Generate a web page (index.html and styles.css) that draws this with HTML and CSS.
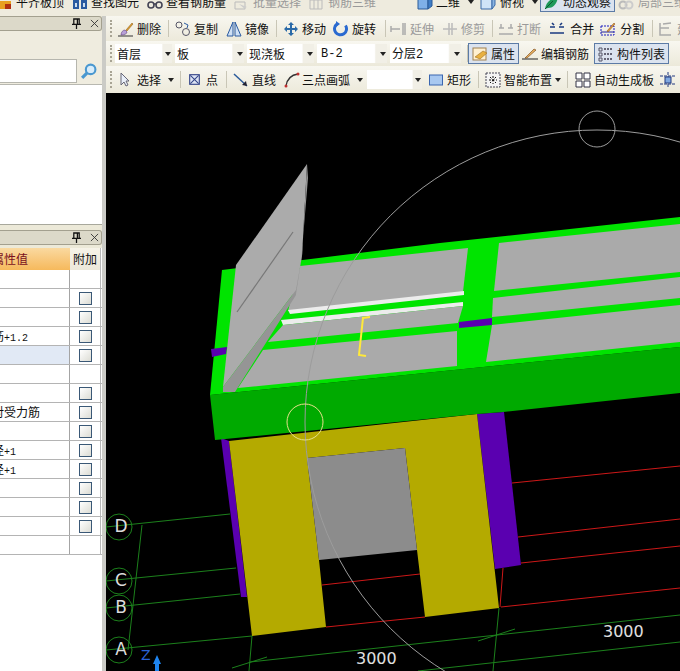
FILE: index.html
```html
<!DOCTYPE html>
<html lang="zh">
<head>
<meta charset="utf-8">
<title>板 三维</title>
<link rel="stylesheet" href="styles.css">
</head>
<body>
<div class="app">
  <div class="bar top">
    <span class="tool w-top1"><svg class="ic ic-s" viewBox="0 0 13 16"><rect x="0" y="7" width="11" height="8" fill="#e8a020"/><rect x="5" y="10" width="6" height="5" fill="#b03010"/></svg><span class="t">平齐板顶</span></span>
    <span class="tool w-top2"><svg class="ic" viewBox="0 0 16 16"><rect x="1" y="5" width="6" height="10" fill="#2a5aa0"/><rect x="9" y="5" width="6" height="10" fill="#2a5aa0"/><rect x="3" y="9" width="2" height="4" fill="#cde"/><rect x="11" y="9" width="2" height="4" fill="#cde"/></svg><span class="t">查找图元</span></span>
    <span class="tool w-top3"><svg class="ic" viewBox="0 0 16 16"><circle cx="4" cy="11" r="3" fill="none" stroke="#445" stroke-width="1.6"/><circle cx="12" cy="11" r="3" fill="none" stroke="#445" stroke-width="1.6"/><path d="M7 10h2" stroke="#445" stroke-width="1.6"/></svg><span class="t">查看钢筋量</span></span>
    <span class="tool off w-top4"><svg class="ic" viewBox="0 0 16 16"><path d="M1 8h10v7H1z" fill="none" stroke="#bbb"/><path d="M5 10l8 3-3 1 2 2" fill="#ccc"/></svg><span class="t">批量选择</span></span>
    <span class="tool off w-top5"><svg class="ic" viewBox="0 0 16 16"><path d="M2 6h12v9H2zM6 6v9M10 6v9" fill="none" stroke="#bbb"/></svg><span class="t">钢筋三维</span></span>
    <span class="tool w-top6"><svg class="ic" viewBox="0 0 16 16"><path d="M1 3h10v12H1z" fill="#7fb0e8" stroke="#2a5a98"/><path d="M11 3l4-2v11l-4 3z" fill="#3f7cc4" stroke="#2a5a98"/></svg><span class="t">二维</span><i class="arrow a5"></i></span>
    <span class="tool w-top7"><svg class="ic" viewBox="0 0 16 16"><path d="M1 4h11v11H1z" fill="#d0e4f8" stroke="#3a6aa8"/><path d="M12 4l3-3v10l-3 4z" fill="#8ab4e0" stroke="#3a6aa8"/></svg><span class="t">俯视</span><i class="arrow a4"></i></span>
    <span class="tool on w-top8"><svg class="ic" viewBox="0 0 16 16"><path d="M2 15C3 8 8 4 15 3c-1 6-4 11-10 11z" fill="#1f9a5a"/><path d="M2 15l8-8" stroke="#0c5a30"/></svg><span class="t">动态观察</span></span>
    <span class="tool off w-top9"><svg class="ic" viewBox="0 0 16 16"><circle cx="5" cy="11" r="3.500" fill="none" stroke="#bbb" stroke-width="2"/><circle cx="11" cy="11" r="3.500" fill="none" stroke="#ccc" stroke-width="2"/></svg><span class="t">局部三维</span></span>
  </div>

  <div class="main">
    <aside class="left">
      <div class="phead"><svg class="pin" viewBox="0 0 10 12"><path d="M2 1h6v6H2zM0 7h10M5 7v5M6 1v6" fill="none" stroke="#111" stroke-width="1.4"/></svg><svg class="close" viewBox="0 0 10 10"><path d="M1 1l8 8M9 1l-8 8" stroke="#333"/></svg></div>
      <div class="search">
        <div class="input"></div>
        <svg class="mag" viewBox="0 0 16 16"><circle cx="10" cy="6" r="4.500" fill="#d8ecfa" stroke="#4a98d0" stroke-width="2"/><path d="M6.500 9.500L2 14" stroke="#4a98d0" stroke-width="3"/></svg>
      </div>
      <div class="tree"></div>

      <div class="phead second"><svg class="pin" viewBox="0 0 10 12"><path d="M2 1h6v6H2zM0 7h10M5 7v5M6 1v6" fill="none" stroke="#111" stroke-width="1.4"/></svg><svg class="close" viewBox="0 0 10 10"><path d="M1 1l8 8M9 1l-8 8" stroke="#333"/></svg></div>
      <div class="table">
        <div class="row head"><div class="val"><span class="cut">属性值</span></div><div class="add">附加</div></div>
        <div class="row"><div class="val"></div><div class="add"></div></div>
        <div class="row"><div class="val"></div><div class="add"><i class="cb"></i></div></div>
        <div class="row"><div class="val"></div><div class="add"><i class="cb"></i></div></div>
        <div class="row"><div class="val"><span class="cut">筋<span class="lat">+1.2</span></span></div><div class="add"><i class="cb"></i></div></div>
        <div class="row sel-row"><div class="val"></div><div class="add"><i class="cb"></i></div></div>
        <div class="row"><div class="val"></div><div class="add"></div></div>
        <div class="row"><div class="val"></div><div class="add"><i class="cb"></i></div></div>
        <div class="row"><div class="val"><span class="cut">对受力筋</span></div><div class="add"><i class="cb"></i></div></div>
        <div class="row"><div class="val"></div><div class="add"><i class="cb"></i></div></div>
        <div class="row"><div class="val"><span class="cut">径<span class="lat">+1</span></span></div><div class="add"><i class="cb"></i></div></div>
        <div class="row"><div class="val"><span class="cut">径<span class="lat">+1</span></span></div><div class="add"><i class="cb"></i></div></div>
        <div class="row"><div class="val"></div><div class="add"><i class="cb"></i></div></div>
        <div class="row"><div class="val"></div><div class="add"><i class="cb"></i></div></div>
        <div class="row"><div class="val"></div><div class="add"><i class="cb"></i></div></div>
        <div class="row"><div class="val"></div><div class="add"></div></div>
      </div>
      <div class="fill"></div>
    </aside>

    <section class="right">
      <div class="bar tb">
        <i class="grip"></i>
        <span class="tool"><svg class="ic" viewBox="0 0 16 16"><path d="M0 15h15" stroke="#333"/><path d="M3 14c0-3 2-5 4-5l2 2c0 2-3 3-6 3z" fill="#b8a0d8" stroke="#604080" stroke-width=".6"/><path d="M8 9l6-7 1 1-6 7z" fill="#e0a030" stroke="#805010" stroke-width=".5"/></svg><span class="t">删除</span></span>
        <i class="sep ml1"></i>
        <span class="tool"><svg class="ic" viewBox="0 0 16 16"><circle cx="4" cy="4" r="3" fill="none" stroke="#556"/><circle cx="11" cy="11" r="3.500" fill="none" stroke="#556"/><path d="M9 2l4 2-1 3" fill="none" stroke="#2a5aa0"/></svg><span class="t">复制</span></span>
        <span class="tool ml2"><svg class="ic" viewBox="0 0 16 16"><path d="M7 1L1 15h6zM9 1l6 14H9z" fill="#cfe0f4" stroke="#2a5aa0"/></svg><span class="t">镜像</span></span>
        <i class="sep ml1"></i>
        <span class="tool"><svg class="ic" viewBox="0 0 16 16"><path d="M8 1l3 3H9v3h3V5l3 3-3 3V9H9v3h2l-3 3-3-3h2V9H4v2L1 8l3-3v2h3V4H5z" fill="#2a6aa8"/></svg><span class="t">移动</span></span>
        <span class="tool ml1"><svg class="ic" viewBox="0 0 16 16"><path d="M12.500 4.500A6 6 0 1 1 4 3" fill="none" stroke="#2a6ad0" stroke-width="3"/><path d="M3 0l4 3-4 3z" fill="#2a6ad0"/></svg><span class="t">旋转</span></span>
        <i class="sep ml3"></i>
        <span class="tool off mln2 g4"><svg class="ic" viewBox="0 0 16 16"><path d="M1 5v6M1 8h9M13 2v12M15 2v12" fill="none" stroke="#aaa" stroke-width="1.500"/></svg><span class="t">延伸</span></span>
        <span class="tool off ml2"><svg class="ic" viewBox="0 0 16 16"><path d="M1 8h14M7 2v12M10 2v12" fill="none" stroke="#bbb" stroke-width="1.500"/></svg><span class="t">修剪</span></span>
        <i class="sep ml1"></i>
        <span class="tool off mln1"><svg class="ic" viewBox="0 0 16 16"><path d="M1 7h5M10 7h5M1 13h14M3 3v4M13 3v4" fill="none" stroke="#aaa" stroke-width="1.500"/></svg><span class="t">打断</span></span>
        <span class="tool ml2 g5"><svg class="ic" viewBox="0 0 16 16"><path d="M1 6h5M10 6h5M1 12h14M3 2l2 2M13 2l-2 2" fill="none" stroke="#1a3a80" stroke-width="1.600"/></svg><span class="t">合并</span></span>
        <span class="tool g4"><svg class="ic" viewBox="0 0 16 16"><rect x="1" y="5" width="13" height="9" fill="none" stroke="#1a1ac0" stroke-dasharray="2 1"/><path d="M1 11h13" stroke="#2020a0"/><path d="M7 10l7-8 1 1-7 8z" fill="#e0a040" stroke="#804010" stroke-width=".5"/></svg><span class="t">分割</span></span>
        <i class="sep ml2"></i>
        <span class="tool off mln1"><svg class="ic" viewBox="0 0 16 16"><path d="M2 2v12h11M2 7h9M5 3l8-1" fill="none" stroke="#aaa" stroke-width="1.500"/></svg><span class="t">延</span></span>
      </div>

      <div class="bar tb">
        <i class="grip"></i>
        <span class="sel sw1 mln3"><span class="t">首层</span><i class="arrow"></i></span>
        <span class="sel sw2"><span class="t">板</span><i class="arrow"></i></span>
        <span class="sel sw3"><span class="t">现浇板</span><i class="arrow"></i></span>
        <span class="sel sw4"><span class="lat big">B-2</span><i class="arrow"></i></span>
        <span class="sel sw5"><span class="t">分层<span class="lat big">2</span></span><i class="arrow"></i></span>
        <i class="sep"></i>
        <span class="tool on w-attr mln6"><svg class="ic" viewBox="0 0 16 16"><rect x="1" y="2" width="13" height="12" fill="#fff0d0" stroke="#a08050"/><path d="M3 11l8-6 4 2-7 6z" fill="#e8b040" stroke="#906010" stroke-width=".5"/></svg><span class="t">属性</span></span>
        <span class="tool mln3"><svg class="ic" viewBox="0 0 16 16"><path d="M0 13h16" stroke="#222"/><path d="M3 12l9-9 2 1-9 8z" fill="#e8b060" stroke="#704010" stroke-width=".6"/></svg><span class="t">编辑钢筋</span></span>
        <span class="tool on w-list mln1"><svg class="ic" viewBox="0 0 16 16"><path d="M1 2h3v3H1zM1 7h3v3H1zM1 12h3v3H1z" fill="none" stroke="#556"/><path d="M6 3h8M6 8h8M6 13h8" stroke="#667" stroke-width="2" stroke-dasharray="2 1"/></svg><span class="t">构件列表</span></span>
      </div>

      <div class="bar tb last">
        <i class="grip"></i>
        <span class="tool ml2 g7"><svg class="ic ic-n" viewBox="0 0 10 16"><path d="M1 1v12l3-3 2 4 2-1-2-4h3z" fill="#e8eef8" stroke="#667"/></svg><span class="t">选择</span><i class="arrow"></i></span>
        <i class="sep"></i>
        <span class="tool ml2 g6"><svg class="ic ic-p" viewBox="0 0 16 16"><rect x="1" y="1" width="14" height="14" fill="#dde4f4" stroke="#334488" stroke-width="1.600"/><path d="M2 2l12 12M14 2L2 14" stroke="#334488" stroke-width="1.500"/></svg><span class="t">点</span></span>
        <i class="sep ml2"></i>
        <span class="tool"><svg class="ic" viewBox="0 0 16 16"><path d="M1 2l13 12" stroke="#2a5a9a" stroke-width="1.500"/><path d="M14 14l-1-5-4 4z" fill="#223"/></svg><span class="t">直线</span></span>
        <span class="tool ml2 g2"><svg class="ic" viewBox="0 0 16 16"><path d="M2 14C3 7 7 3 14 2" fill="none" stroke="#333" stroke-width="1.300"/><circle cx="2" cy="14" r="1.500" fill="#c03030"/><circle cx="14" cy="2" r="1.500" fill="#c03030"/></svg><span class="t">三点画弧</span><i class="arrow a5"></i></span>
        <span class="sel sw6 mln2"><i class="arrow"></i></span>
        <span class="tool"><svg class="ic" viewBox="0 0 16 16"><rect x="1.500" y="3" width="13" height="10" fill="#a8c8f0" stroke="#3a66b0"/></svg><span class="t">矩形</span></span>
        <i class="sep ml1"></i>
        <span class="tool"><svg class="ic" viewBox="0 0 16 16"><rect x="1" y="1" width="14" height="14" fill="#f4f4f4" stroke="#445" stroke-dasharray="2 1"/><path d="M8 4v8M4 8h8M5 5l6 6M11 5l-6 6" stroke="#111" stroke-dasharray="2 1.500"/></svg><span class="t">智能布置</span><i class="arrow"></i></span>
        <i class="sep"></i>
        <span class="tool ml1"><svg class="ic" viewBox="0 0 16 16"><path d="M1 1h6v6H1zM9 1h6v6H9zM1 9h6v6H1zM9 9h6v6H9z" fill="#fff" stroke="#334"/></svg><span class="t">自动生成板</span></span>
        <span class="tool"><svg class="ic" viewBox="0 0 16 16"><path d="M0 4h16M0 12h16M8 0v16" stroke="#223a80" stroke-dasharray="3 1"/><rect x="5" y="5" width="6" height="6" fill="#80a8e0" stroke="#223a80"/></svg></span>
      </div>

      <svg class="view" viewBox="106 93 574 578" xmlns="http://www.w3.org/2000/svg">
        <rect x="106" y="93" width="574" height="578" fill="#000"/>

        <g class="grid-g">
          <path d="M106 527L230 514M106 581L236 568M106 608L240 594M106 650L252 636"/>
          <path d="M142 525L128 650M252 636L249 671M499 608L493 671"/>
          <path d="M250 662L680 615M418 671L680 642M232 668L267 657M478 641L515 629"/>
          <circle cx="119" cy="527" r="13"/><circle cx="119" cy="581" r="13"/><circle cx="119" cy="608" r="13"/><circle cx="119" cy="650" r="13"/>
        </g>
        <g class="grid-r">
          <path d="M322 585L420 574M326 627L425 617M512 483L680 466M518 537L680 519M521 563L680 546M501 607L680 588M503 568L500 607"/>
        </g>

        <polygon class="purple" points="221,438 229,441 247,597 241,597"/>
        <polygon class="purple" points="477,414 504,412 521,565 495,569"/>
        <polygon class="olive" points="229,441 477,414 499,608 425,617 417,550 405,448 307,458 319,560 326,627 252,636"/>
        <polygon class="back" points="307,458 405,448 417,550 319,560"/>

        <polygon class="green-d" points="210,395 680,347 680,393 503,412 477,414 215,440"/>
        <polygon class="green-l" points="210,395 222,270 440,243 680,217 680,347"/>

        <polygon class="slab" points="300,266 468,248 463,292 288,311"/>
        <polygon class="white" points="288,310 464,291 464,295 290,314"/>
        <polygon class="white" points="281,320 463,302 463,306 283,325"/>
        <polygon class="slab" points="283,325 463,306 458,323 268,342"/>
        <polygon class="slab" points="263,350 457,331 457,366 238,388"/>
        <polygon class="slab" points="499,243 680,224 680,272 494,291"/>
        <polygon class="slab" points="493,298 680,277 680,298 492,317"/>
        <polygon class="slab" points="492,325 680,305 680,342 486,362"/>
        <polygon class="purple" points="459,322 492,318 492,325 459,328"/>
        <polygon class="purple" points="211,349 227,347 226,354 212,357"/>

        <polygon class="wall" points="236,265 307,164 302,256 296,290 223,387"/>
        <polygon class="wall-d" points="307,164 308,178 301,262 296,294 296,290 302,256"/>
        <polygon class="wall-d" points="296,290 296,295 235,392 223,392 223,387"/>
        <path class="wall-line" d="M293 232L237 312"/>

        <path class="bracket" d="M370 317L363 318L359 355L366 356"/>

        <g class="orbit">
          <circle cx="597" cy="422" r="292"/>
          <circle cx="597" cy="129" r="18"/>
        </g>
        <circle class="orbit-y" cx="305" cy="422" r="18"/>

        <g class="labels">
          <text x="121" y="532">D</text>
          <text x="121" y="586">C</text>
          <text x="121" y="613">B</text>
          <text x="121" y="655">A</text>
        </g>
        <text class="dim" x="356" y="664">3000</text>
        <text class="dim" x="603" y="637">3000</text>
        <text class="axis" x="141" y="660">Z</text>
        <path class="axis-a" d="M157 655L161 664H159V671H155V664H153Z"/>
      </svg>
    </section>
  </div>
</div>
</body>
</html>
```

FILE: styles.css
```css
* { box-sizing: border-box; }
html, body { margin: 0; height: 100%; overflow: hidden; background: #ece9d8; }
body { font: 12px/16px "Noto Sans CJK SC", "Liberation Sans", sans-serif; color: #111; }

.app { width: 680px; height: 671px; display: flex; flex-direction: column; overflow: hidden; }

/* toolbars */
.bar { display: flex; align-items: center; flex: none; white-space: nowrap; overflow: hidden; }
.top { height: 28px; margin-top: -12px; padding-bottom: 1px; background: #eeebde; }
.tb { height: 25px; padding-left: 4px; gap: 6px; background: linear-gradient(#f8f7f0, #ece9da); }
.tb.last { height: 27px; }

.tool { display: inline-flex; align-items: center; gap: 3px; height: 21px; flex: none; }
.tool.off { color: #9a9a9a; }
.tool.on { background: #dbe3ef; border: 1px solid #5c7ba6; padding: 0 3px; }
.t { display: inline-block; }
.ic { width: 16px; height: 16px; flex: none; }
.ic-s { width: 13px; }
.ic-n { width: 10px; }
.ic-p { width: 11px; height: 11px; }

.grip { width: 2px; height: 17px; border-left: 2px dotted #a8a494; flex: none; }
.sep { width: 1px; height: 17px; background: #c9c6b6; flex: none; }
.arrow { width: 0; height: 0; border: 3px solid transparent; border-top: 4px solid #222; border-bottom: 0; flex: none; }
.a4 { margin-left: 4px; }
.a5 { margin-left: 5px; }
.lat { font-family: "Liberation Mono", monospace; font-size: 10px; }
.big { font-size: 12px; }

/* fine spacing inside the toolbars */
.ml1 { margin-left: 1px; }
.ml2 { margin-left: 2px; }
.ml3 { margin-left: 3px; }
.mln1 { margin-left: -1px; }
.mln2 { margin-left: -2px; }
.mln3 { margin-left: -3px; }
.mln6 { margin-left: -6px; }
.g2 { gap: 2px; }
.g4 { gap: 4px; }
.g5 { gap: 5px; }
.g6 { gap: 6px; }
.g7 { gap: 7px; }

/* top strip */
.w-top1 { width: 72px; }
.w-top2 { width: 75px; }
.w-top3 { width: 87px; }
.w-top4 { width: 74px; }
.w-top5 { width: 109px; gap: 4px; }
.w-top6 { width: 63px; }
.w-top7 { width: 60px; gap: 4px; }
.w-top8.on { width: 75px; padding: 0 2px; gap: 4px; }
.w-top9 { margin-left: 3px; gap: 4px; }

/* dropdowns */
.sel { display: inline-flex; align-items: center; justify-content: space-between; height: 19px; padding: 0 1px 0 2px; background: linear-gradient(90deg, #fff 82%, #f1efe6 84%); flex: none; }
.sel + .sel { margin-left: -3px; }
.sw1 { width: 57px; }
.sw2 { width: 69px; }
.sw3 { width: 67px; }
.sw4 { width: 70px; padding-left: 4px; }
.sw5 { width: 71px; }
.sw6 { width: 55px; justify-content: flex-end; }
.w-attr { width: 51px; }
.w-list { width: 75px; }

/* layout */
.main { flex: 1; display: flex; min-height: 0; }
.left { width: 106px; flex: none; display: flex; flex-direction: column; background: #ece9d8; border-right: 4px solid #cbcbc6; overflow: hidden; }
.right { flex: 1; display: flex; flex-direction: column; min-width: 0; }
.view { display: block; width: 574px; height: 578px; flex: none; }

/* panels */
.phead { height: 15px; flex: none; display: flex; align-items: center; justify-content: flex-end; gap: 7px; padding-right: 2px; background: #dcd9c9; border: 1px solid #a3a08f; border-left: 0; border-radius: 0 3px 3px 0; }
.second { margin-top: 5px; }
.pin { width: 9px; height: 11px; }
.close { width: 9px; height: 9px; margin-left: 2px; }
.search { height: 53px; flex: none; background: #efecdf; display: flex; align-items: flex-end; gap: 3px; padding-bottom: 1px; }
.input { width: 77px; height: 24px; background: #fff; border: 1px solid #b6b6ae; border-left: 0; }
.mag { width: 17px; height: 17px; margin-bottom: 3px; }
.tree { height: 141px; flex: none; background: #fff; border-top: 1px solid #b8b8b0; border-bottom: 1px solid #a8a89c; }
.fill { flex: 1; background: #fff; }

/* attribute table */
.table { flex: none; background: #fff; margin-top: 3px; }
.row { display: grid; grid-template-columns: 70px 31px 1px; height: 19px; border-bottom: 1px solid #b4b4b4; }
.row.head { height: 22px; border: 0; }
.val { overflow: hidden; line-height: 18px; white-space: nowrap; border-right: 1px solid #a4a4a4; }
.add { display: flex; align-items: center; justify-content: center; border-right: 1px solid #b9b9b9; }
.cut { display: block; margin-left: -8px; }
.head .val { background: linear-gradient(#fad9a0, #f6b95c); color: #7a1020; line-height: 22px; border-right: 0; }
.head .add { background: linear-gradient(#f6f3e8, #ece8da); }
.sel-row .val { background: #e1e9f5; }
.cb { width: 13px; height: 13px; border: 1px solid #3a5876; background: linear-gradient(135deg, #fff, #dcdcd4); display: block; }

/* 3D canvas */
.grid-g path, .grid-g circle { fill: none; stroke: #1c801c; stroke-width: 1; }
.grid-r path { fill: none; stroke: #cc1818; stroke-width: 1; }
.purple { fill: #5a00b0; }
.olive { fill: #b4aa00; }
.back { fill: #8c8c8c; }
.green-d { fill: #00aa00; }
.green-l { fill: #00e400; }
.slab { fill: #aaaaaa; }
.white { fill: #ececec; }
.wall { fill: #ababab; }
.wall-d { fill: #959595; }
.wall-line { stroke: #777; stroke-width: 1.2; fill: none; }
.bracket { stroke: #ffe93a; stroke-width: 2; fill: none; }
.orbit circle { fill: none; stroke: #9c9c9c; stroke-width: 1; }
.orbit-y { fill: none; stroke: #e4e08a; stroke-width: 1; }
.labels text { fill: #dcdcdc; font: 17px "DejaVu Sans", sans-serif; text-anchor: middle; }
.dim { fill: #e0e0e0; font: 16px "DejaVu Sans", sans-serif; }
.axis { fill: #2a62d8; font: 14px "DejaVu Sans", sans-serif; }
.axis-a { fill: #1e84ee; }
```
